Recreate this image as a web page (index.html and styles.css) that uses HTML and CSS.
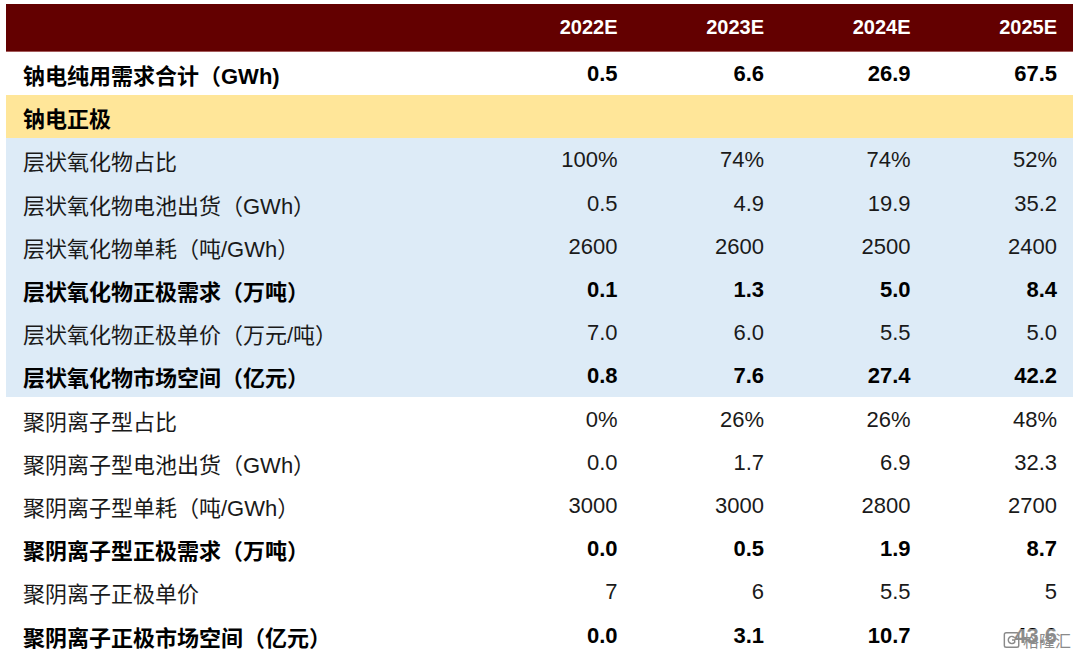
FILE: index.html
```html
<!DOCTYPE html>
<html lang="zh">
<head>
<meta charset="utf-8">
<link rel="stylesheet" href="styles.css">
</head>
<body>
<div class="wrap">
<table class="tbl">
  <colgroup>
    <col class="c-label"><col class="c-num"><col class="c-num"><col class="c-num"><col class="c-num">
  </colgroup>
  <thead>
    <tr class="head"><th></th><th>2022E</th><th>2023E</th><th>2024E</th><th>2025E</th></tr>
  </thead>
  <tbody>
    <tr class="bold"><td>钠电纯用需求合计（GWh)</td><td>0.5</td><td>6.6</td><td>26.9</td><td>67.5</td></tr>
    <tr class="bold yellow"><td>钠电正极</td><td></td><td></td><td></td><td></td></tr>
    <tr class="blue"><td>层状氧化物占比</td><td>100%</td><td>74%</td><td>74%</td><td>52%</td></tr>
    <tr class="blue"><td>层状氧化物电池出货（GWh）</td><td>0.5</td><td>4.9</td><td>19.9</td><td>35.2</td></tr>
    <tr class="blue"><td>层状氧化物单耗（吨/GWh）</td><td>2600</td><td>2600</td><td>2500</td><td>2400</td></tr>
    <tr class="blue bold"><td>层状氧化物正极需求（万吨）</td><td>0.1</td><td>1.3</td><td>5.0</td><td>8.4</td></tr>
    <tr class="blue"><td>层状氧化物正极单价（万元/吨）</td><td>7.0</td><td>6.0</td><td>5.5</td><td>5.0</td></tr>
    <tr class="blue bold"><td>层状氧化物市场空间（亿元）</td><td>0.8</td><td>7.6</td><td>27.4</td><td>42.2</td></tr>
    <tr><td>聚阴离子型占比</td><td>0%</td><td>26%</td><td>26%</td><td>48%</td></tr>
    <tr><td>聚阴离子型电池出货（GWh）</td><td>0.0</td><td>1.7</td><td>6.9</td><td>32.3</td></tr>
    <tr><td>聚阴离子型单耗（吨/GWh）</td><td>3000</td><td>3000</td><td>2800</td><td>2700</td></tr>
    <tr class="bold"><td>聚阴离子型正极需求（万吨）</td><td>0.0</td><td>0.5</td><td>1.9</td><td>8.7</td></tr>
    <tr><td>聚阴离子正极单价</td><td>7</td><td>6</td><td>5.5</td><td>5</td></tr>
    <tr class="bold"><td>聚阴离子正极市场空间（亿元）</td><td>0.0</td><td>3.1</td><td>10.7</td><td>43.6</td></tr>
  </tbody>
</table>
<div class="wm">
  <svg class="wm-icon" viewBox="0 0 20 20" width="18" height="18">
    <rect x="1.5" y="2" width="16" height="16" rx="2" fill="none" stroke="#8a8a8a" stroke-width="1.6"/>
    <path d="M13 7.5 A4 4 0 1 0 13 12.5 L13 10 L10 10" fill="none" stroke="#8a8a8a" stroke-width="1.6"/>
  </svg>
  <span class="wm-text">格隆汇</span>
</div>
</div>
</body>
</html>
```
FILE: styles.css
```css
html, body {
  margin: 0;
  padding: 0;
  background: #ffffff;
}
.wrap {
  position: relative;
  width: 1080px;
  height: 657px;
  overflow: hidden;
  padding: 4px 0 0 6px;
  box-sizing: border-box;
}
.tbl {
  border-collapse: collapse;
  table-layout: fixed;
  width: 1067px;
  font-family: "Liberation Sans", Arial, "Noto Sans CJK SC", sans-serif;
  font-size: 22px;
  color: #1a1a1a;
}
.c-label { width: 481px; }
.c-num { width: 146.5px; }
.head th {
  background: #630000;
  color: #ffffff;
  font-weight: bold;
  font-size: 20px;
  height: 47px;
  padding: 0 16px 0 0;
  text-align: right;
  border-bottom: 1px solid #a35a5a;
}
.tbl td {
  height: 43.2px;
  padding: 2px 16px 0 17px;
  box-sizing: border-box;
  text-align: right;
  white-space: nowrap;
}
.tbl td:first-child {
  text-align: left;
}
.bold td {
  font-weight: bold;
  color: #000000;
}
.yellow td { background: #ffe699; }
.blue td { background: #ddebf7; }
.wm {
  position: absolute;
  right: 6px;
  bottom: 6px;
  display: flex;
  align-items: center;
  gap: 2px;
  padding: 1px 3px;
  background: rgba(255, 255, 255, 0.55);
}
.wm-icon { display: block; }
.wm-text {
  font-family: "Noto Sans CJK SC", sans-serif;
  font-size: 16px;
  color: #8a8a8a;
  line-height: 20px;
}
```
